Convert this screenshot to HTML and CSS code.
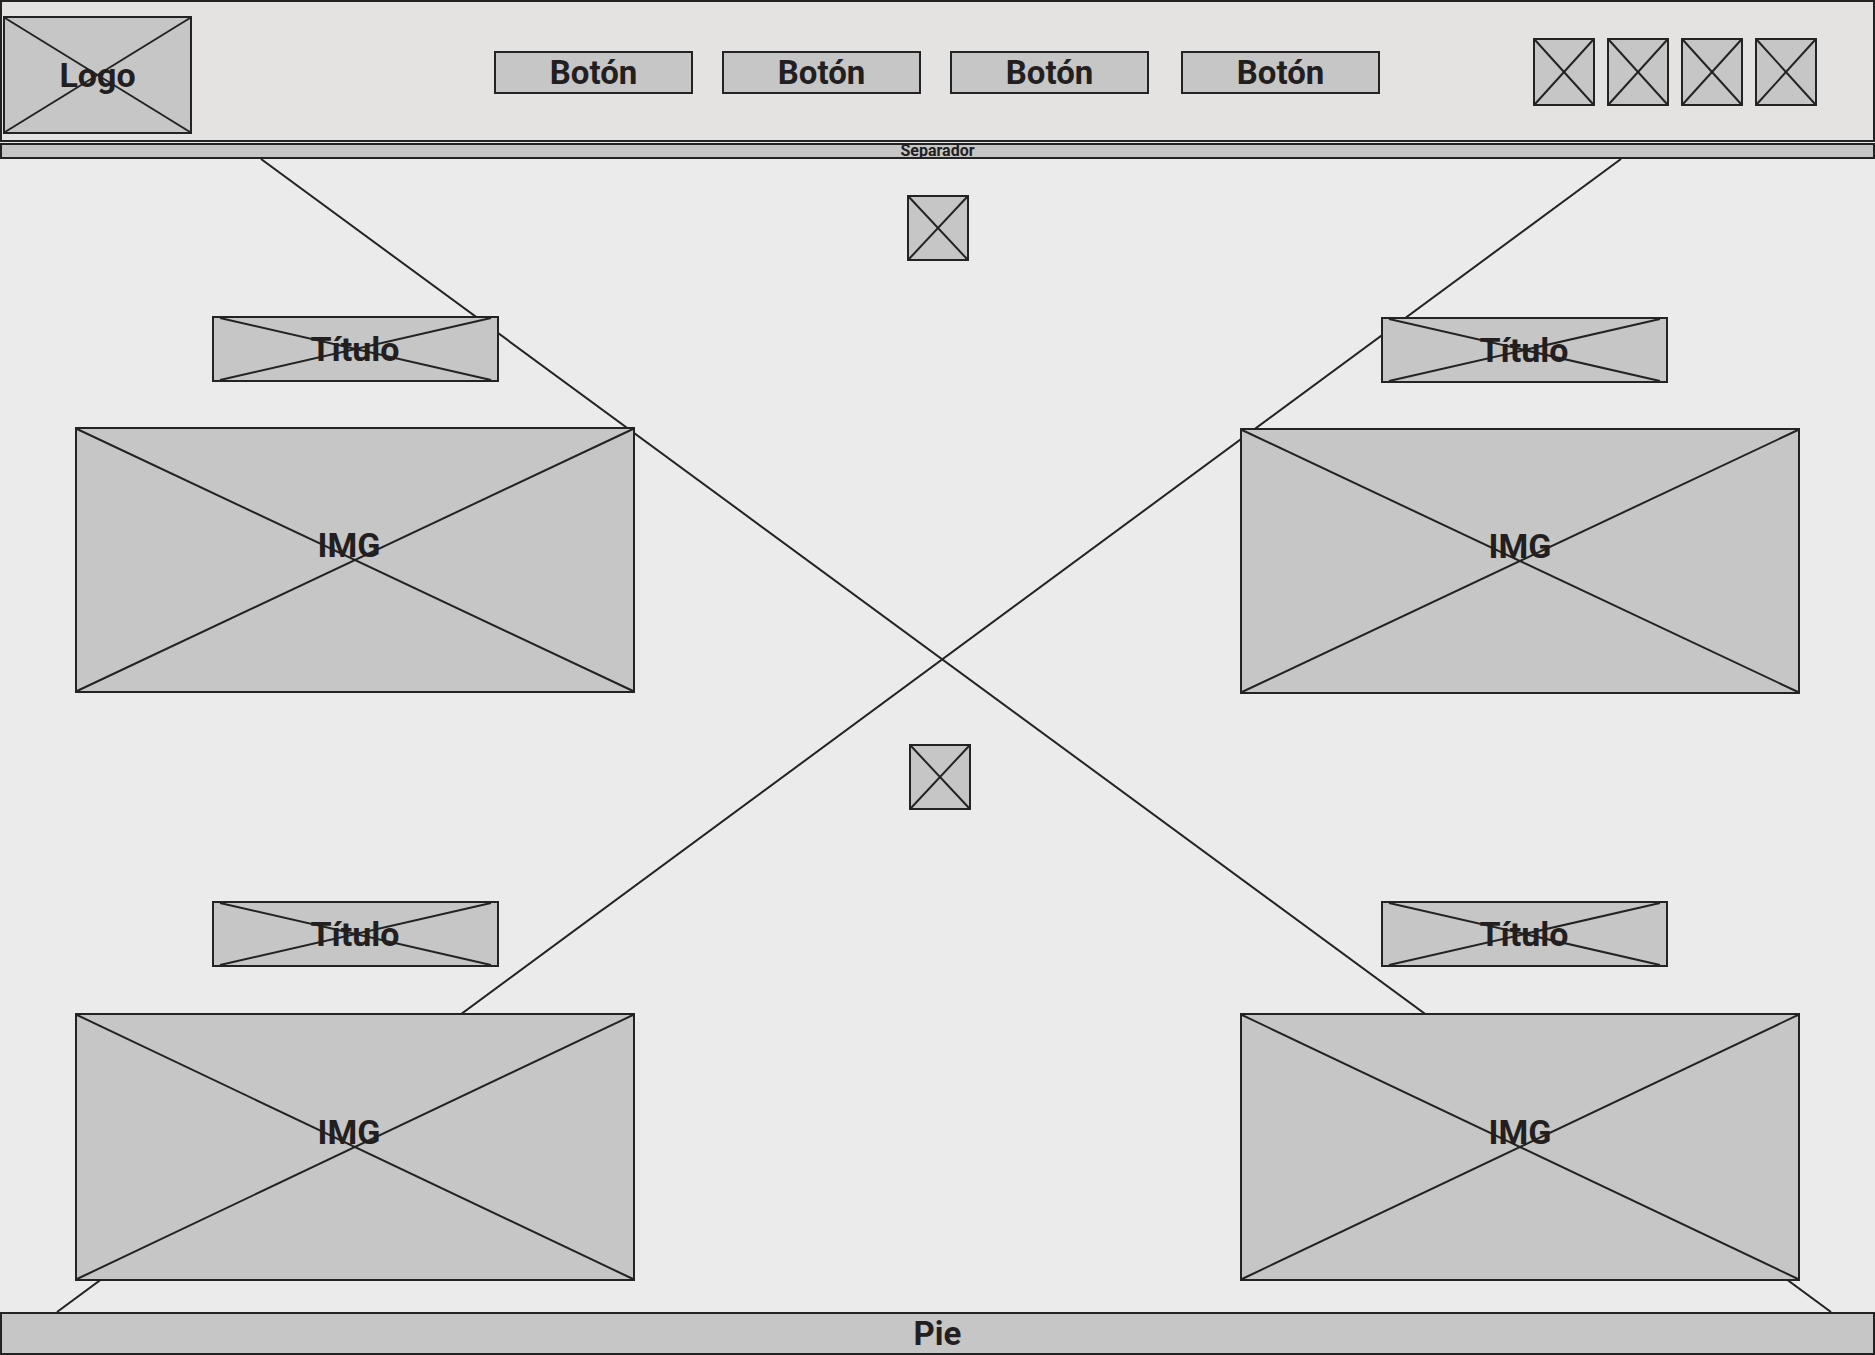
FILE: index.html
```html
<!DOCTYPE html>
<html lang="es">
<head>
<meta charset="utf-8">
<title>Wireframe</title>
<link rel="stylesheet" href="styles.css">
</head>
<body>
<header class="topbar">
  <div class="ph logo">
    <svg class="x" viewBox="0 0 100 100" preserveAspectRatio="none"><line x1="0" y1="0" x2="100" y2="100"/><line x1="100" y1="0" x2="0" y2="100"/></svg>
    <span class="label">Logo</span>
  </div>
  <nav class="nav">
    <div class="btn">Botón</div>
    <div class="btn">Botón</div>
    <div class="btn">Botón</div>
    <div class="btn btn-last">Botón</div>
  </nav>
  <div class="icons">
    <div class="ph icon"><svg class="x" viewBox="0 0 100 100" preserveAspectRatio="none"><line x1="0" y1="0" x2="100" y2="100"/><line x1="100" y1="0" x2="0" y2="100"/></svg></div>
    <div class="ph icon"><svg class="x" viewBox="0 0 100 100" preserveAspectRatio="none"><line x1="0" y1="0" x2="100" y2="100"/><line x1="100" y1="0" x2="0" y2="100"/></svg></div>
    <div class="ph icon"><svg class="x" viewBox="0 0 100 100" preserveAspectRatio="none"><line x1="0" y1="0" x2="100" y2="100"/><line x1="100" y1="0" x2="0" y2="100"/></svg></div>
    <div class="ph icon"><svg class="x" viewBox="0 0 100 100" preserveAspectRatio="none"><line x1="0" y1="0" x2="100" y2="100"/><line x1="100" y1="0" x2="0" y2="100"/></svg></div>
  </div>
</header>
<div class="separator">Separador</div>
<main class="canvas">
  <svg class="bigx" viewBox="0 0 1875 1153" preserveAspectRatio="none"><line x1="261" y1="0" x2="1831" y2="1153"/><line x1="1621" y1="0" x2="57" y2="1153"/></svg>

  <div class="ph icon center-icon">
    <svg class="x" viewBox="0 0 100 100" preserveAspectRatio="none"><line x1="0" y1="0" x2="100" y2="100"/><line x1="100" y1="0" x2="0" y2="100"/></svg>
  </div>

  <div class="row row-top">
    <section class="card card-left">
      <div class="ph title">
        <svg class="x x-title" viewBox="0 0 100 100" preserveAspectRatio="none"><line x1="0" y1="0" x2="100" y2="100"/><line x1="100" y1="0" x2="0" y2="100"/></svg>
        <span class="label">Título</span>
      </div>
      <div class="ph img">
        <svg class="x" viewBox="0 0 100 100" preserveAspectRatio="none"><line x1="0" y1="0" x2="100" y2="100"/><line x1="100" y1="0" x2="0" y2="100"/></svg>
        <span class="label">IMG</span>
      </div>
    </section>
    <section class="card card-right">
      <div class="ph title">
        <svg class="x x-title" viewBox="0 0 100 100" preserveAspectRatio="none"><line x1="0" y1="0" x2="100" y2="100"/><line x1="100" y1="0" x2="0" y2="100"/></svg>
        <span class="label">Título</span>
      </div>
      <div class="ph img">
        <svg class="x" viewBox="0 0 100 100" preserveAspectRatio="none"><line x1="0" y1="0" x2="100" y2="100"/><line x1="100" y1="0" x2="0" y2="100"/></svg>
        <span class="label">IMG</span>
      </div>
    </section>
  </div>

  <div class="ph icon center-icon center-icon-2">
    <svg class="x" viewBox="0 0 100 100" preserveAspectRatio="none"><line x1="0" y1="0" x2="100" y2="100"/><line x1="100" y1="0" x2="0" y2="100"/></svg>
  </div>

  <div class="row row-bottom">
    <section class="card card-left">
      <div class="ph title">
        <svg class="x x-title" viewBox="0 0 100 100" preserveAspectRatio="none"><line x1="0" y1="0" x2="100" y2="100"/><line x1="100" y1="0" x2="0" y2="100"/></svg>
        <span class="label">Título</span>
      </div>
      <div class="ph img img-tall">
        <svg class="x" viewBox="0 0 100 100" preserveAspectRatio="none"><line x1="0" y1="0" x2="100" y2="100"/><line x1="100" y1="0" x2="0" y2="100"/></svg>
        <span class="label">IMG</span>
      </div>
    </section>
    <section class="card card-right">
      <div class="ph title">
        <svg class="x x-title" viewBox="0 0 100 100" preserveAspectRatio="none"><line x1="0" y1="0" x2="100" y2="100"/><line x1="100" y1="0" x2="0" y2="100"/></svg>
        <span class="label">Título</span>
      </div>
      <div class="ph img img-tall">
        <svg class="x" viewBox="0 0 100 100" preserveAspectRatio="none"><line x1="0" y1="0" x2="100" y2="100"/><line x1="100" y1="0" x2="0" y2="100"/></svg>
        <span class="label">IMG</span>
      </div>
    </section>
  </div>
</main>
<footer class="footer">Pie</footer>
</body>
</html>
```

FILE: styles.css
```css
* {
  box-sizing: border-box;
}

html, body {
  margin: 0;
  padding: 0;
}

body {
  width: 1875px;
  height: 1355px;
  overflow: hidden;
  background: #ebebeb;
  font-family: Roboto, "Liberation Sans", sans-serif;
  font-weight: 700;
  color: #231f20;
}

/* generic placeholder box with an X */
.ph {
  position: relative;
  display: flex;
  align-items: center;
  justify-content: center;
  background: #c6c6c6;
  border: 2px solid #232323;
  flex: none;
}

.x {
  position: absolute;
  top: 0;
  left: 0;
  width: 100%;
  height: 100%;
  overflow: visible;
}

.x line,
.bigx line {
  stroke: #232323;
  stroke-width: 2;
  vector-effect: non-scaling-stroke;
}

.label {
  position: relative;
  font-size: 34px;
  line-height: 1;
}

/* header */
.topbar {
  height: 142px;
  display: flex;
  align-items: center;
  background: #e4e3e1;
  border: 2px solid #232323;
  padding-left: 1px;
}

.logo {
  width: 189px;
  height: 118px;
  margin-top: 8px;
}

.nav {
  display: flex;
  gap: 29px;
  margin-left: 302px;
  margin-top: 3px;
}

.btn {
  width: 199px;
  height: 43px;
  background: #c6c6c6;
  border: 2px solid #232323;
  display: flex;
  align-items: center;
  justify-content: center;
  font-size: 33px;
  line-height: 1;
}

.btn-last {
  margin-left: 3px;
}

.icons {
  display: flex;
  gap: 12px;
  margin-left: 153px;
  margin-top: 2px;
}

.icon {
  width: 62px;
  height: 68px;
}

/* separator */
.separator {
  height: 16px;
  margin-top: 1px;
  background: #c6c6c6;
  border: 2px solid #232323;
  display: flex;
  align-items: center;
  justify-content: center;
  font-size: 16px;
  line-height: 1;
}

/* main canvas */
.canvas {
  position: relative;
  height: 1153px;
  display: flex;
  flex-direction: column;
  padding-top: 36px;
  overflow: hidden;
}

.bigx {
  position: absolute;
  top: 0;
  left: 0;
  width: 100%;
  height: 100%;
}

.center-icon {
  width: 62px;
  height: 66px;
  align-self: center;
  margin-left: 1px;
}

.center-icon-2 {
  margin-top: 50px;
  margin-left: 4px;
}

.row {
  display: flex;
  justify-content: space-between;
  padding: 0 75px;
}

.row-top {
  margin-top: 55px;
}

.row-bottom {
  margin-top: 91px;
}

.card {
  width: 560px;
  display: flex;
  flex-direction: column;
  align-items: center;
  gap: 45px;
}

.row-bottom .card {
  gap: 46px;
}

.card-right .title {
  margin-left: 8px;
}

.row-top .card-right {
  margin-top: 1px;
}

.title {
  width: 287px;
  height: 66px;
}

.x-title {
  left: 6px;
  width: calc(100% - 12px);
}

.img {
  width: 560px;
  height: 266px;
  padding-bottom: 30px;
}

.card-left .img {
  padding-right: 12px;
}

.img-tall {
  height: 268px;
}

/* footer */
.footer {
  height: 43px;
  background: #c6c6c6;
  border: 2px solid #232323;
  display: flex;
  align-items: center;
  justify-content: center;
  font-size: 33px;
  line-height: 1;
}
```
